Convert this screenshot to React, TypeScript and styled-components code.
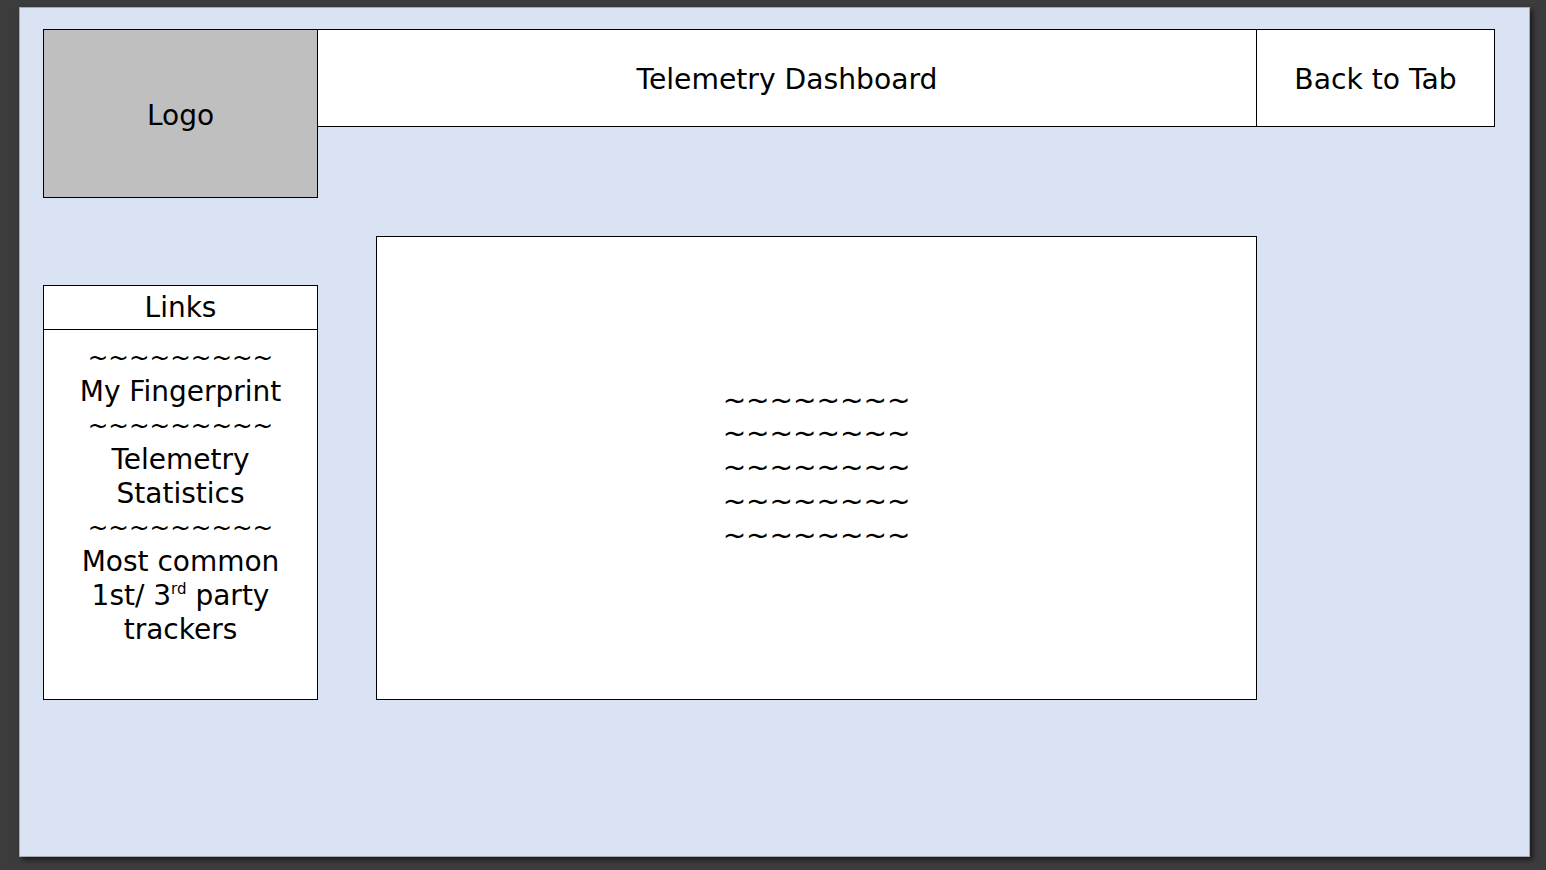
import React from "react";
import styled, { createGlobalStyle } from "styled-components";

const Global = createGlobalStyle`
  html, body { margin: 0; padding: 0; background: #3c3c3c; }
  body { width: 1546px; height: 870px; overflow: hidden; font-family: "DejaVu Sans", "Noto Sans", sans-serif; color: #000; }
  * { box-sizing: border-box; }
`;

const Canvas = styled.div`
  margin: 7px 0 0 19px;
  width: 1511px;
  height: 850px;
  background: #dae3f3;
  border: 1px solid #a6a9b0;
  box-shadow: 3px 3px 5px rgba(0, 0, 0, 0.55);
  padding: 21px 34px 0 23px;
  display: flex;
  flex-direction: column;
`;

const Header = styled.div`
  display: flex;
  align-items: flex-start;
`;

const Logo = styled.div`
  width: 275px;
  height: 169px;
  background: #bfbfbf;
  border: 1px solid #000;
  display: flex;
  align-items: center;
  justify-content: center;
  font-size: 28px;
  padding-top: 3px;
`;

const HeaderCell = styled.div<{ $width?: number }>`
  ${(p) => (p.$width ? `width: ${p.$width}px;` : "flex: 1;")}
  height: 98px;
  background: #fff;
  border: 1px solid #000;
  border-left: none;
  display: flex;
  align-items: center;
  justify-content: center;
  font-size: 28.2px;
  padding-top: 3px;
`;

const Content = styled.div`
  display: flex;
  align-items: flex-start;
  margin-top: 38px;
`;

const Sidebar = styled.div`
  width: 275px;
  height: 415px;
  margin-top: 49px;
  background: #fff;
  border: 1px solid #000;
  display: flex;
  flex-direction: column;
`;

const SidebarHead = styled.div`
  height: 44px;
  border-bottom: 1px solid #000;
  display: flex;
  align-items: center;
  justify-content: center;
  font-size: 28px;
`;

const SidebarBody = styled.div`
  padding-top: 11px;
  text-align: center;
  font-size: 28px;
  line-height: 34px;
`;

const Line = styled.div``;

const SmallTilde = styled.div`
  font-size: 24.6px;
  line-height: 34px;
  white-space: pre;
`;

const Sup = styled.sup`
  font-size: 15px;
  line-height: 0;
  vertical-align: 11px;
`;

const Main = styled.div`
  width: 881px;
  height: 464px;
  margin-left: 58px;
  background: #fff;
  border: 1px solid #000;
  display: flex;
  flex-direction: column;
  align-items: center;
  justify-content: center;
  font-size: 28px;
  line-height: 33.75px;
`;

const TildeRow = styled.div`
  white-space: pre;
`;

export default function App() {
  const small = "~~~~~~~~~";
  const big = "~~~~~~~~";
  return (
    <>
      <Global />
      <Canvas>
        <Header>
          <Logo>Logo</Logo>
          <HeaderCell>Telemetry Dashboard</HeaderCell>
          <HeaderCell $width={238}>Back to Tab</HeaderCell>
        </Header>
        <Content>
          <Sidebar>
            <SidebarHead>Links</SidebarHead>
            <SidebarBody>
              <SmallTilde>{small}</SmallTilde>
              <Line>My Fingerprint</Line>
              <SmallTilde>{small}</SmallTilde>
              <Line>Telemetry</Line>
              <Line>Statistics</Line>
              <SmallTilde>{small}</SmallTilde>
              <Line>Most common</Line>
              <Line>
                1st/ 3<Sup>rd</Sup> party
              </Line>
              <Line>trackers</Line>
            </SidebarBody>
          </Sidebar>
          <Main>
            {[0, 1, 2, 3, 4].map((i) => (
              <TildeRow key={i}>{big}</TildeRow>
            ))}
          </Main>
        </Content>
      </Canvas>
    </>
  );
}
